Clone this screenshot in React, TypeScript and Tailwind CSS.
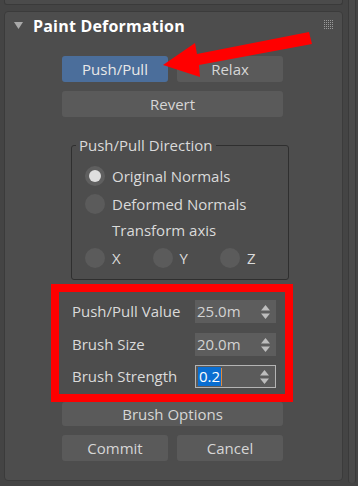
import React from 'react';

const font = { fontFamily: '"Open Sans", "Noto Sans", sans-serif' };

function Btn({ label, active, className }: { label: string; active?: boolean; className?: string }) {
    return (
        <div
            className={
                'flex items-center justify-center rounded-[3px] text-[15px] ' +
                (active ? 'bg-[#4b6e9b] text-[#e8e8e8] ' : 'bg-[#5a5a5a] text-[#d6d6d6] ') +
                (className ?? '')
            }
        >
            {label}
        </div>
    );
}

function Radio({ on }: { on?: boolean }) {
    return on ? (
        <div className="w-[20px] h-[20px] rounded-full bg-[#5f5f5f] flex items-center justify-center">
            <div className="w-[12px] h-[12px] rounded-full bg-[#dedede]" />
        </div>
    ) : (
        <div className="w-[20px] h-[20px] rounded-full bg-[#5b5b5b]" />
    );
}

function Spinner({ value, focused }: { value: string; focused?: boolean }) {
    return (
        <div
            className={
                'w-[81px] h-[23px] flex items-center justify-between pl-[2px] pr-[6px] text-[15px] text-[#d2d2d2] ' +
                (focused ? 'bg-[#5b5b5b] border border-[#b4b4b4]' : 'bg-[#5d5d5d]')
            }
        >
            {focused ? (
                <span className="flex items-center h-[19px]">
                    <span className="bg-[#0a6ed1] text-white h-[19px] leading-[19px] px-[1px]">{value}</span>
                    <span className="w-[1px] h-[18px] bg-[#e08a3c]" />
                </span>
            ) : (
                <span>{value}</span>
            )}
            <svg width="9" height="14" viewBox="0 0 9 14">
                <polygon points="0,5.5 4.5,0 9,5.5" fill="#bdbdbd" />
                <polygon points="0,8.5 9,8.5 4.5,14" fill="#bdbdbd" />
            </svg>
        </div>
    );
}

export default function App() {
    return (
        <div className="w-[358px] h-[486px] bg-[#444444] relative overflow-hidden flex" style={font}>
            <div className="w-[348px] flex flex-col pl-[4px]">
                {/* bottom of the rollout above */}
                <div className="w-[339px] h-[5px] bg-[#4b4b4b] border-b border-x border-[#3a3a3a] rounded-b-[3px]" />

                <div className="mt-[6px] w-[339px] h-[470px] bg-[#4d4d4d] border border-[#3b3b3b] rounded-[4px]">
                    <div className="h-[28px] flex items-center pl-[9px] pr-[9px]">
                        <svg width="9" height="7" viewBox="0 0 9 7" className="mt-[-2px]">
                            <polygon points="0,0 9,0 4.5,7" fill="#a9a9a9" />
                        </svg>
                        <span className="ml-[10px] text-[16px] font-bold text-white tracking-[0.2px]">Paint Deformation</span>
                        <div className="ml-auto grid grid-cols-5 gap-[1px] mt-[-4px]">
                            {Array.from({ length: 25 }).map((_, i) => (
                                <div key={i} className="w-[1px] h-[1px] bg-[#9a9a9a]" />
                            ))}
                        </div>
                    </div>

                    <div className="pl-[57px] pt-[16px] flex flex-col w-[280px]">
                        <div className="flex gap-[9px]">
                            <Btn label="Push/Pull" active className="w-[106px] h-[26px]" />
                            <Btn label="Relax" className="w-[106px] h-[26px]" />
                        </div>
                        <Btn label="Revert" className="mt-[9px] w-[221px] h-[26px]" />

                        <fieldset className="mt-[18px] ml-[9px] w-[202px] border border-[#2f2f2f] rounded-[3px] pb-[9px] text-[15px] text-[#dadada]">
                            <legend className="ml-[4px] px-[3px] h-[20px] leading-[20px]">Push/Pull Direction</legend>
                            <div className="pt-[9px] pl-[13px]">
                                <div className="h-[24px] flex items-center gap-[7px]">
                                    <Radio on />
                                    <span>Original Normals</span>
                                </div>
                                <div className="mt-[4px] h-[24px] flex items-center gap-[7px]">
                                    <Radio />
                                    <span>Deformed Normals</span>
                                </div>
                                <div className="mt-[2px] h-[24px] flex items-center pl-[27px]">Transform axis</div>
                                <div className="mt-[4px] h-[24px] flex items-center">
                                    {['X', 'Y', 'Z'].map((a) => (
                                        <div key={a} className="w-[67.5px] flex items-center gap-[7px]">
                                            <Radio />
                                            <span>{a}</span>
                                        </div>
                                    ))}
                                </div>
                            </div>
                        </fieldset>

                        {/* annotation box */}
                        <div className="mt-[4px] ml-[-11px] w-[242px] border-[8px] border-[#ff0000] pt-[8px] pb-[6px] pl-[13px] pr-[9px] flex flex-col text-[15px] text-[#dadada]">
                            <div className="h-[23px] flex items-center justify-between">
                                <span>Push/Pull Value</span>
                                <Spinner value="25.0m" />
                            </div>
                            <div className="mt-[10px] h-[23px] flex items-center justify-between">
                                <span>Brush Size</span>
                                <Spinner value="20.0m" />
                            </div>
                            <div className="mt-[9px] h-[23px] flex items-center justify-between">
                                <span>Brush Strength</span>
                                <Spinner value="0.2" focused />
                            </div>
                        </div>

                        <Btn label="Brush Options" className="w-[221px] h-[24px]" />
                        <div className="mt-[9px] flex gap-[9px]">
                            <Btn label="Commit" className="w-[106px] h-[26px]" />
                            <Btn label="Cancel" className="w-[106px] h-[26px]" />
                        </div>
                    </div>
                </div>
            </div>

            {/* scrollbar */}
            <div className="w-[8px] h-[483px] bg-[#4a4a4a] border-x border-[#3a3a3a] rounded-b-[3px]" />

            {/* red arrow annotation */}
            <svg className="absolute left-0 top-0 pointer-events-none" width="358" height="486" viewBox="0 0 358 486">
                <polygon points="163,65 195,43 197,54 309,32 312,44 199,65 200,77" fill="#ff0000" />
            </svg>
        </div>
    );
}
